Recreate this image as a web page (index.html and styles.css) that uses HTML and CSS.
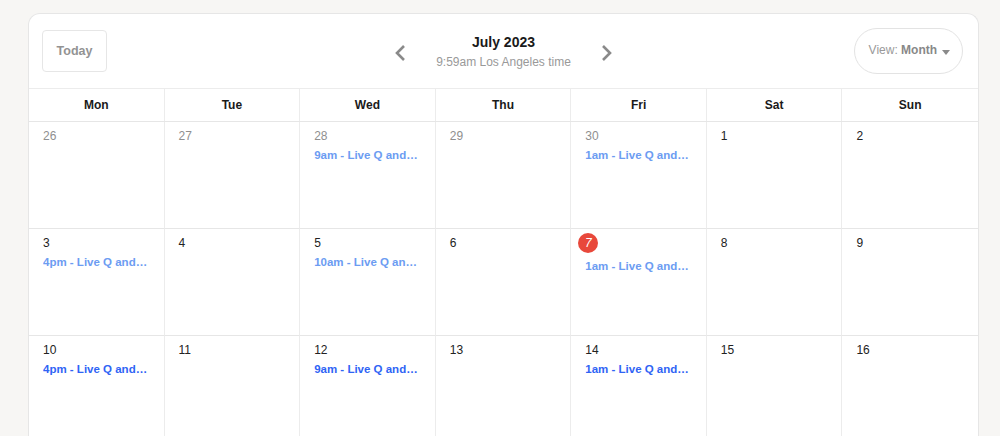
FILE: index.html
```html
<!DOCTYPE html>
<html lang="en">
<head>
    <meta charset="UTF-8">
    <meta name="viewport" content="width=device-width, initial-scale=1.0">
    <title>Calendar</title>
    <link rel="stylesheet" href="styles.css">
</head>
<body>

<div class="calendar">
    <div class="cal-header">
        <button class="today-btn">Today</button>
        <div class="month-nav">
            <button class="nav-arrow">
                <svg width="14" height="18" viewBox="0 0 14 18"><path d="M10 2 L3 9 L10 16" fill="none" stroke="#8a8a8a" stroke-width="2.6"/></svg>
            </button>
            <div class="month-title">
                <h2>July 2023</h2>
                <p>9:59am Los Angeles time</p>
            </div>
            <button class="nav-arrow">
                <svg width="14" height="18" viewBox="0 0 14 18"><path d="M4 2 L11 9 L4 16" fill="none" stroke="#8a8a8a" stroke-width="2.6"/></svg>
            </button>
        </div>
        <button class="view-btn">View: <b>Month</b> <span class="caret"></span></button>
    </div>

    <div class="weekdays">
        <div>Mon</div>
        <div>Tue</div>
        <div>Wed</div>
        <div>Thu</div>
        <div>Fri</div>
        <div>Sat</div>
        <div>Sun</div>
    </div>

    <div class="grid">
        <div class="day other"><span class="num">26</span></div>
        <div class="day other"><span class="num">27</span></div>
        <div class="day other"><span class="num">28</span><a class="event past">9am - Live Q and…</a></div>
        <div class="day other"><span class="num">29</span></div>
        <div class="day other"><span class="num">30</span><a class="event past">1am - Live Q and…</a></div>
        <div class="day"><span class="num">1</span></div>
        <div class="day"><span class="num">2</span></div>

        <div class="day"><span class="num">3</span><a class="event past">4pm - Live Q and…</a></div>
        <div class="day"><span class="num">4</span></div>
        <div class="day"><span class="num">5</span><a class="event past">10am - Live Q and…</a></div>
        <div class="day"><span class="num">6</span></div>
        <div class="day"><span class="num today">7</span><a class="event past">1am - Live Q and…</a></div>
        <div class="day"><span class="num">8</span></div>
        <div class="day"><span class="num">9</span></div>

        <div class="day"><span class="num">10</span><a class="event">4pm - Live Q and…</a></div>
        <div class="day"><span class="num">11</span></div>
        <div class="day"><span class="num">12</span><a class="event">9am - Live Q and…</a></div>
        <div class="day"><span class="num">13</span></div>
        <div class="day"><span class="num">14</span><a class="event">1am - Live Q and…</a></div>
        <div class="day"><span class="num">15</span></div>
        <div class="day"><span class="num">16</span></div>
    </div>
</div>

</body>
</html>
```

FILE: styles.css
```css
body {
    font-family: 'Liberation Sans', Arial, sans-serif;
    margin: 0;
    padding: 13px 21px 0 28px;
    background-color: #f7f6f4;
    overflow: hidden;
}

.calendar {
    background-color: white;
    border: 1px solid #e6e6e6;
    border-radius: 12px 12px 0 0;
    border-bottom: none;
    height: 440px;
}

.cal-header {
    display: flex;
    align-items: center;
    justify-content: space-between;
    height: 74px;
    padding: 0 15px 0 13px;
    border-bottom: 1px solid #ececec;
}

button {
    font-family: inherit;
    background: white;
    cursor: pointer;
}

.today-btn {
    width: 65px;
    height: 42px;
    border: 1px solid #e6e6e6;
    border-radius: 4px;
    color: #939393;
    font-size: 12.5px;
    font-weight: bold;
    padding: 0;
}

.month-nav {
    display: flex;
    align-items: center;
    gap: 28px;
    margin-left: 46px;
}

.nav-arrow {
    border: none;
    padding: 0;
    display: flex;
    margin-top: 4px;
}

.month-title {
    text-align: center;
}

.month-title h2 {
    font-size: 14px;
    margin: 0 0 5px;
    color: #1a1a1a;
}

.month-title p {
    font-size: 12px;
    margin: 0;
    color: #999;
}

.view-btn {
    width: 109px;
    height: 46px;
    border: 1px solid #e3e3e3;
    border-radius: 23px;
    color: #999;
    font-size: 12px;
    padding: 0 0 2px 2px;
}

.view-btn b {
    color: #888;
}

.caret {
    display: inline-block;
    width: 0;
    height: 0;
    margin-left: 2px;
    border-left: 4.5px solid transparent;
    border-right: 4.5px solid transparent;
    border-top: 5px solid #8a8a8a;
    vertical-align: -1px;
}

.weekdays {
    display: grid;
    grid-template-columns: repeat(7, minmax(0, 1fr));
    height: 32px;
    border-bottom: 1px solid #e6e6e6;
}

.weekdays div {
    display: flex;
    align-items: center;
    justify-content: center;
    font-size: 12px;
    font-weight: bold;
    color: #1a1a1a;
    border-right: 1px solid #ececec;
}

.weekdays div:last-child,
.grid .day:nth-child(7n) {
    border-right: none;
}

.grid {
    display: grid;
    grid-template-columns: repeat(7, minmax(0, 1fr));
    grid-auto-rows: 107px;
}

.day {
    border-right: 1px solid #ececec;
    border-bottom: 1px solid #e6e6e6;
    padding: 7px 16px 0 14px;
    display: flex;
    flex-direction: column;
    align-items: flex-start;
    min-width: 0;
}

.num {
    font-size: 12px;
    color: #222;
    line-height: 14px;
}

.other .num {
    color: #8f8f8f;
}

.num.today {
    background: #e8483b;
    color: white;
    width: 20px;
    height: 20px;
    line-height: 20px;
    border-radius: 50%;
    text-align: center;
    margin: -3px 0 0 -7px;
    font-style: italic;
}

.event {
    margin-top: 5px;
    font-size: 11.5px;
    font-weight: bold;
    color: #2f64f5;
    white-space: nowrap;
    overflow: hidden;
    text-overflow: ellipsis;
    max-width: 100%;
    line-height: 14px;
}

.event.past {
    color: #6c9cf2;
}

.num.today + .event {
    margin-top: 6px;
}
```
